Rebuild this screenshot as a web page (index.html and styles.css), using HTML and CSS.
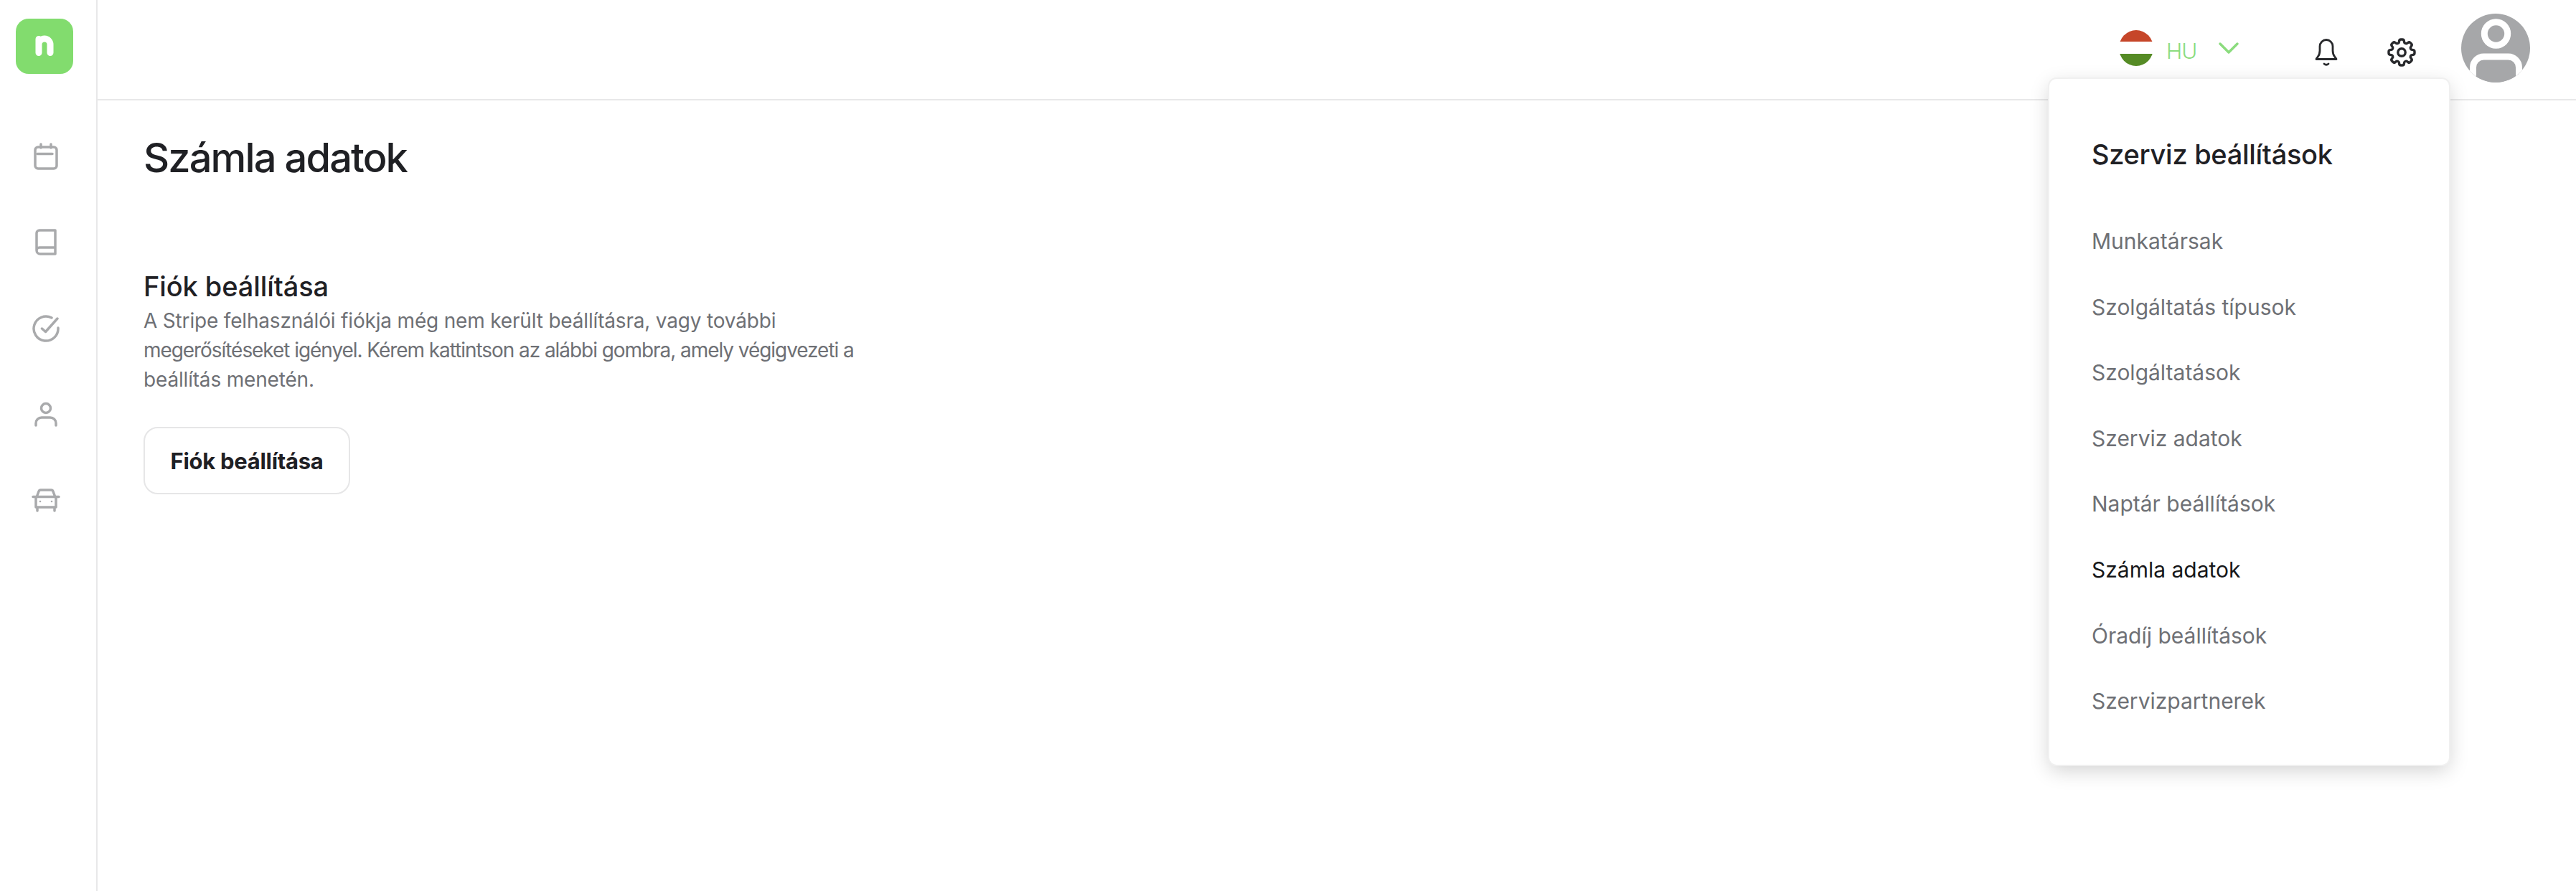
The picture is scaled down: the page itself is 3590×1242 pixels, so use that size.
FILE: index.html
```html
<!DOCTYPE html>
<html lang="hu">
<head>
<meta charset="utf-8">
<title>Számla adatok</title>
<link rel="stylesheet" href="styles.css">
</head>
<body>
<div class="app">
  <aside class="sidebar">
    <div class="logo"><svg class="logo-n" viewBox="0 0 80 77"><path d="M32 28.500V47.500M32 36a8 8 0 0 1 16 0v11.500"/></svg></div>
    <nav class="side-nav">
      <svg class="side-icon" viewBox="0 0 40 40"><rect x="5" y="7" width="30" height="30" rx="4"/><path d="M8 16.500H29M13 3v5M27 3v5"/></svg>
      <svg class="side-icon" viewBox="0 0 40 40"><path d="M33 3H11a4 4 0 0 0-4 4v24a5 5 0 0 0 5 5h21zM7 31a4 4 0 0 1 4-4h22"/></svg>
      <svg class="side-icon" viewBox="0 0 40 40"><path d="M28 5A17 17 0 1 0 37 19M14.500 20l5 4.500L36 6"/></svg>
      <svg class="side-icon" viewBox="0 0 40 40"><circle cx="20" cy="11" r="6.500"/><path d="M6 35v-3a8 8 0 0 1 8-8h12a8 8 0 0 1 8 8v3"/></svg>
      <svg class="side-icon" viewBox="0 0 40 40"><path d="M7 15l3-8a3 3 0 0 1 3-2h14a3 3 0 0 1 3 2l3 8M2 14.500h36M6 15v14h28V15M8 29v5M32 29v5"/><circle class="dot" cx="12" cy="21" r="1.300"/><circle class="dot" cx="28" cy="21" r="1.300"/></svg>
    </nav>
  </aside>
  <div class="main">
    <header class="topbar">
      <div class="lang">
        <svg class="flag" viewBox="0 0 48 50"><clipPath id="flagclip"><ellipse cx="24" cy="25" rx="24" ry="25"/></clipPath><g clip-path="url(#flagclip)"><rect width="48" height="16" fill="#c64629"/><rect y="16" width="48" height="17" fill="#fff"/><rect y="33" width="48" height="17" fill="#558b25"/></g></svg>
        <span class="lang-code">HU</span>
        <svg class="chev" viewBox="0 0 30 20"><path d="M3 4l12 12L27 4"/></svg>
      </div>
      <svg class="bell" viewBox="0 0 36 42"><path d="M4 30.500c0-1 1-1.500 2-3 2-2.500 3-5 3-9v-6a9 9 0 0 1 18 0v6c0 4 1 6.500 3 9 1 1.500 2 2 2 3zM15 37q3 2.500 6 0"/></svg>
      <svg class="gear" viewBox="0 0 24 24"><path d="M10.343 3.940c.09-.542.56-.94 1.110-.94h1.093c.55 0 1.020.398 1.110.94l.149.894c.07.424.384.764.78.93.398.164.855.142 1.205-.108l.737-.527a1.125 1.125 0 0 1 1.450.12l.773.774c.39.389.44 1.002.12 1.450l-.527.737c-.25.35-.272.806-.107 1.204.165.397.505.71.93.78l.893.15c.543.09.94.559.94 1.109v1.094c0 .55-.397 1.020-.94 1.110l-.894.149c-.424.07-.764.383-.929.78-.165.398-.143.854.107 1.204l.527.738c.32.447.269 1.060-.12 1.450l-.774.773a1.125 1.125 0 0 1-1.449.12l-.738-.527c-.35-.25-.806-.272-1.203-.107-.398.165-.71.505-.781.929l-.149.894c-.09.542-.56.94-1.110.94h-1.094c-.55 0-1.019-.398-1.110-.94l-.148-.894c-.071-.424-.384-.764-.781-.93-.398-.164-.854-.142-1.204.108l-.738.527c-.447.32-1.060.269-1.450-.12l-.773-.774a1.125 1.125 0 0 1-.12-1.450l.527-.737c.25-.35.272-.806.108-1.204-.165-.397-.506-.71-.93-.78l-.894-.15c-.542-.09-.94-.56-.94-1.109v-1.094c0-.55.398-1.020.94-1.110l.894-.149c.424-.07.765-.383.93-.78.165-.398.143-.854-.108-1.204l-.526-.738a1.125 1.125 0 0 1 .12-1.450l.773-.773a1.125 1.125 0 0 1 1.450-.12l.737.527c.35.25.807.272 1.204.107.397-.165.71-.505.78-.929l.15-.894z"/><circle cx="12" cy="12" r="2.600"/></svg>
      <svg class="avatar" viewBox="0 0 96 96"><clipPath id="avclip"><circle cx="48" cy="48" r="48"/></clipPath><g clip-path="url(#avclip)"><rect width="96" height="96" fill="#a6a7a9"/><circle cx="48.500" cy="28" r="16.200" fill="#a6a7a9" stroke="#fff" stroke-width="9"/><path d="M16.500 100V75a15 15 0 0 1 15-15h34a15 15 0 0 1 15 15v25" fill="#a6a7a9" stroke="#fff" stroke-width="9"/></g></svg>
    </header>
    <main class="content">
      <h1 class="title">Számla adatok</h1>
      <section class="account">
        <h2 class="sub">Fiók beállítása</h2>
        <p class="desc"><span class="line line-a">A Stripe felhasználói fiókja még nem került beállításra, vagy további</span> <span class="line line-b">megerősítéseket igényel. Kérem kattintson az alábbi gombra, amely végigvezeti a</span> <span class="line line-a">beállítás menetén.</span></p>
        <button class="btn" type="button">Fiók beállítása</button>
      </section>
    </main>
  </div>
  <div class="menu">
    <div class="menu-title">Szerviz beállítások</div>
    <ul class="menu-list">
      <li>Munkatársak</li>
      <li>Szolgáltatás típusok</li>
      <li>Szolgáltatások</li>
      <li>Szerviz adatok</li>
      <li>Naptár beállítások</li>
      <li class="active">Számla adatok</li>
      <li>Óradíj beállítások</li>
      <li>Szervizpartnerek</li>
    </ul>
  </div>
</div>
</body>
</html>
```

FILE: styles.css
```css
* { box-sizing: border-box; }
html, body { margin: 0; height: 100%; background: #fff; }
body { font-family: Inter, "Liberation Sans", sans-serif; color: #1f2024; }
.app { display: flex; height: 1242px; position: relative; overflow: hidden; }
.sidebar { width: 136px; flex: none; border-right: 2px solid #e8e8e9; padding: 26px 0 0 22px; }
.logo { width: 80px; height: 77px; border-radius: 18px; background: #82dc6e; }
.logo-n { display: block; width: 80px; height: 77px; fill: none; stroke: #fff; stroke-width: 9; stroke-linecap: round; }
.side-nav { display: flex; flex-direction: column; margin: 95px 0 0 22px; gap: 80px; }
.side-icon { display: block; width: 40px; height: 40px; fill: none; stroke: #a9aaac; stroke-width: 3.500; stroke-linecap: round; stroke-linejoin: round; }
.side-icon .dot { fill: #a9aaac; stroke: none; }
.main { flex: 1; min-width: 0; }
.topbar { height: 140px; border-bottom: 2px solid #e8e8e9; display: flex; align-items: flex-start; padding: 19px 64px 0 0; justify-content: flex-end; }
.lang { display: flex; align-items: flex-start; margin: 23px 103px 0 0; }
.flag { width: 48px; height: 50px; flex: none; }
.lang-code { width: 48px; font-size: 30px; font-weight: 300; color: #8bdc7e; margin: 11px 0 0 18px; line-height: 36px; letter-spacing: -1px; }
.chev { width: 30px; height: 20px; margin: 15px 0 0 24px; fill: none; stroke: #8bdc7e; stroke-width: 3.500; stroke-linecap: round; stroke-linejoin: round; }
.bell { width: 36px; height: 42px; margin-top: 33px; fill: none; stroke: #28292c; stroke-width: 2.800; stroke-linecap: round; stroke-linejoin: round; }
.gear { width: 48px; height: 48px; margin: 30px 0 0 62.500px; fill: none; stroke: #28292c; stroke-width: 1.700; stroke-linecap: round; stroke-linejoin: round; }
.avatar { width: 96px; height: 96px; margin-left: 59.500px; }
.content { padding: 0 0 0 64px; }
.title { margin: 44px 0 0; font-size: 56px; line-height: 72px; font-weight: 500; letter-spacing: -1.900px; }
.account { margin-top: 119px; width: 1040px; }
.sub { margin: 0; font-size: 38px; line-height: 48px; font-weight: 500; letter-spacing: -.1px; }
.desc { margin: 4px 0 0; font-size: 28px; line-height: 41px; color: #6e7075; }
.line { display: block; white-space: nowrap; }
.line-a { letter-spacing: -.18px; }
.line-b { letter-spacing: -1.060px; }
.btn { display: block; margin-top: 45px; width: 288px; height: 94px; border: 2px solid #e6e6e7; border-radius: 20px; background: #fff; font: 700 31px Inter, sans-serif; color: #1f2024; letter-spacing: -.3px; }
.menu { position: absolute; left: 2856px; top: 110px; width: 557px; height: 956px; background: #fff; border-radius: 10px; box-shadow: 0 0 0 2px #f0f0f0, 0 8px 28px rgba(0,0,0,.18); padding: 80px 0 0 59px; }
.menu-title { font-size: 38px; line-height: 50px; font-weight: 500; letter-spacing: -.3px; }
.menu-list { list-style: none; margin: 51px 0 0; padding: 0; font-size: 30px; color: #6e7075; }
.menu-list li { height: 91.600px; line-height: 91.600px; }
.menu-list .active { color: #17181a; }
```
